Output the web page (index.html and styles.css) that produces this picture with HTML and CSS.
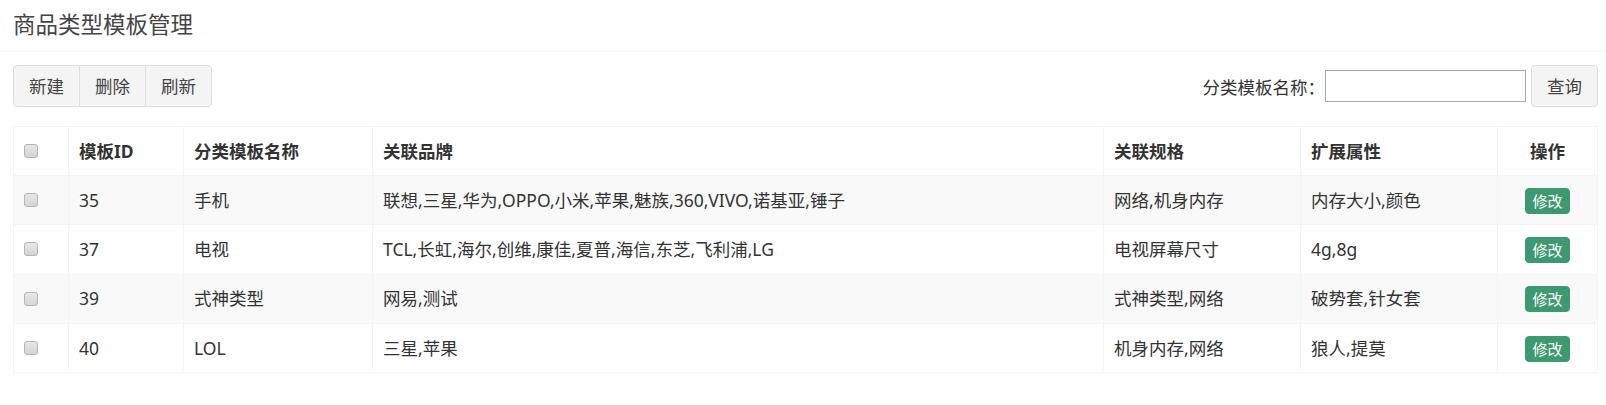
FILE: index.html
```html
<!DOCTYPE html>
<html lang="zh-CN">
<head>
    <meta charset="UTF-8">
    <meta name="viewport" content="width=device-width, initial-scale=1.0">
    <title>商品类型模板管理</title>
    <link rel="stylesheet" href="styles.css">
</head>
<body>
    <div class="page-header">
        <h1>商品类型模板管理</h1>
    </div>
    <div class="main">
        <div class="toolbar">
            <div class="btn-group">
                <button class="btn">新建</button>
                <button class="btn">删除</button>
                <button class="btn">刷新</button>
            </div>
            <div class="search">
                <label for="nameInput">分类模板名称：</label>
                <input type="text" id="nameInput">
                <button class="btn btn-search">查询</button>
            </div>
        </div>

        <table class="grid">
            <colgroup>
                <col class="col-check">
                <col class="col-id">
                <col class="col-name">
                <col class="col-brand">
                <col class="col-spec">
                <col class="col-attr">
                <col class="col-op">
            </colgroup>
            <thead>
                <tr>
                    <th><input type="checkbox"></th>
                    <th>模板ID</th>
                    <th>分类模板名称</th>
                    <th>关联品牌</th>
                    <th>关联规格</th>
                    <th>扩展属性</th>
                    <th class="center">操作</th>
                </tr>
            </thead>
            <tbody>
                <tr>
                    <td><input type="checkbox"></td>
                    <td>35</td>
                    <td>手机</td>
                    <td>联想,三星,华为,OPPO,小米,苹果,魅族,360,VIVO,诺基亚,锤子</td>
                    <td>网络,机身内存</td>
                    <td>内存大小,颜色</td>
                    <td class="center"><button class="btn-xs">修改</button></td>
                </tr>
                <tr>
                    <td><input type="checkbox"></td>
                    <td>37</td>
                    <td>电视</td>
                    <td>TCL,长虹,海尔,创维,康佳,夏普,海信,东芝,飞利浦,LG</td>
                    <td>电视屏幕尺寸</td>
                    <td>4g,8g</td>
                    <td class="center"><button class="btn-xs">修改</button></td>
                </tr>
                <tr>
                    <td><input type="checkbox"></td>
                    <td>39</td>
                    <td>式神类型</td>
                    <td>网易,测试</td>
                    <td>式神类型,网络</td>
                    <td>破势套,针女套</td>
                    <td class="center"><button class="btn-xs">修改</button></td>
                </tr>
                <tr>
                    <td><input type="checkbox"></td>
                    <td>40</td>
                    <td>LOL</td>
                    <td>三星,苹果</td>
                    <td>机身内存,网络</td>
                    <td>狼人,提莫</td>
                    <td class="center"><button class="btn-xs">修改</button></td>
                </tr>
            </tbody>
        </table>
    </div>
</body>
</html>
```

FILE: styles.css
```css
body {
    margin: 0;
    font-family: "Noto Sans", "Noto Sans CJK SC", sans-serif;
    font-size: 17.5px;
    color: #333;
    background-color: #fff;
}
.page-header {
    padding: 10px 13px 12px;
    border-bottom: 1px solid #f4f4f4;
}
h1 {
    margin: 0;
    font-size: 22.5px;
    line-height: 29px;
    font-weight: normal;
    color: #444;
}
.main {
    padding: 13px 9px 0 13px;
}
.toolbar {
    display: flex;
    justify-content: space-between;
    align-items: center;
    margin-right: -1px;
}
.btn {
    font-family: inherit;
    font-size: 17.5px;
    line-height: 25px;
    padding: 7.5px 15px;
    color: #444;
    background-color: #f4f4f4;
    border: 1px solid #ddd;
    border-radius: 4px;
    cursor: pointer;
}
.btn-group {
    display: flex;
}
.btn-group .btn {
    border-radius: 0;
    margin-left: -1px;
}
.btn-group .btn:first-child {
    margin-left: 0;
    border-radius: 4px 0 0 4px;
}
.btn-group .btn:last-child {
    border-radius: 0 4px 4px 0;
}
.search {
    display: flex;
    align-items: center;
}
.search input {
    width: 201px;
    height: 32px;
    box-sizing: border-box;
    border: 1px solid #a9a9a9;
    font-size: 17.5px;
    padding: 0 4px;
    margin-right: 5px;
}
.grid {
    margin-top: 19px;
    width: 1584px;
    table-layout: fixed;
    border-collapse: collapse;
    border: 1px solid #f4f4f4;
}
.col-check { width: 55px; }
.col-id { width: 115px; }
.col-name { width: 189px; }
.col-brand { width: 731px; }
.col-spec { width: 197px; }
.col-attr { width: 197px; }
.col-op { width: 100px; }
.grid th,
.grid td {
    border: 1px solid #f4f4f4;
    padding: 10px;
    line-height: 25px;
    text-align: left;
    vertical-align: middle;
    white-space: nowrap;
}
.grid th {
    font-weight: bold;
    padding-top: 11.5px;
    padding-bottom: 11.5px;
}
.grid td {
    padding-top: 10.5px;
    padding-bottom: 10.5px;
}
.grid tbody tr:nth-child(odd) {
    background-color: #f9f9f9;
}
.grid .center {
    text-align: center;
}
.grid input[type="checkbox"] {
    appearance: none;
    -webkit-appearance: none;
    width: 14px;
    height: 14px;
    margin: 0;
    display: block;
    border: 1px solid #b5b5b5;
    border-radius: 3px;
    background: linear-gradient(#e8e8e8, #d4d4d4);
    box-sizing: border-box;
}
.btn-xs {
    font-family: inherit;
    font-size: 15px;
    line-height: 22px;
    padding: 1px 6px;
    color: #fff;
    background-color: #3d9970;
    border: 1px solid #3d9970;
    border-radius: 4px;
    cursor: pointer;
    vertical-align: middle;
}
```
